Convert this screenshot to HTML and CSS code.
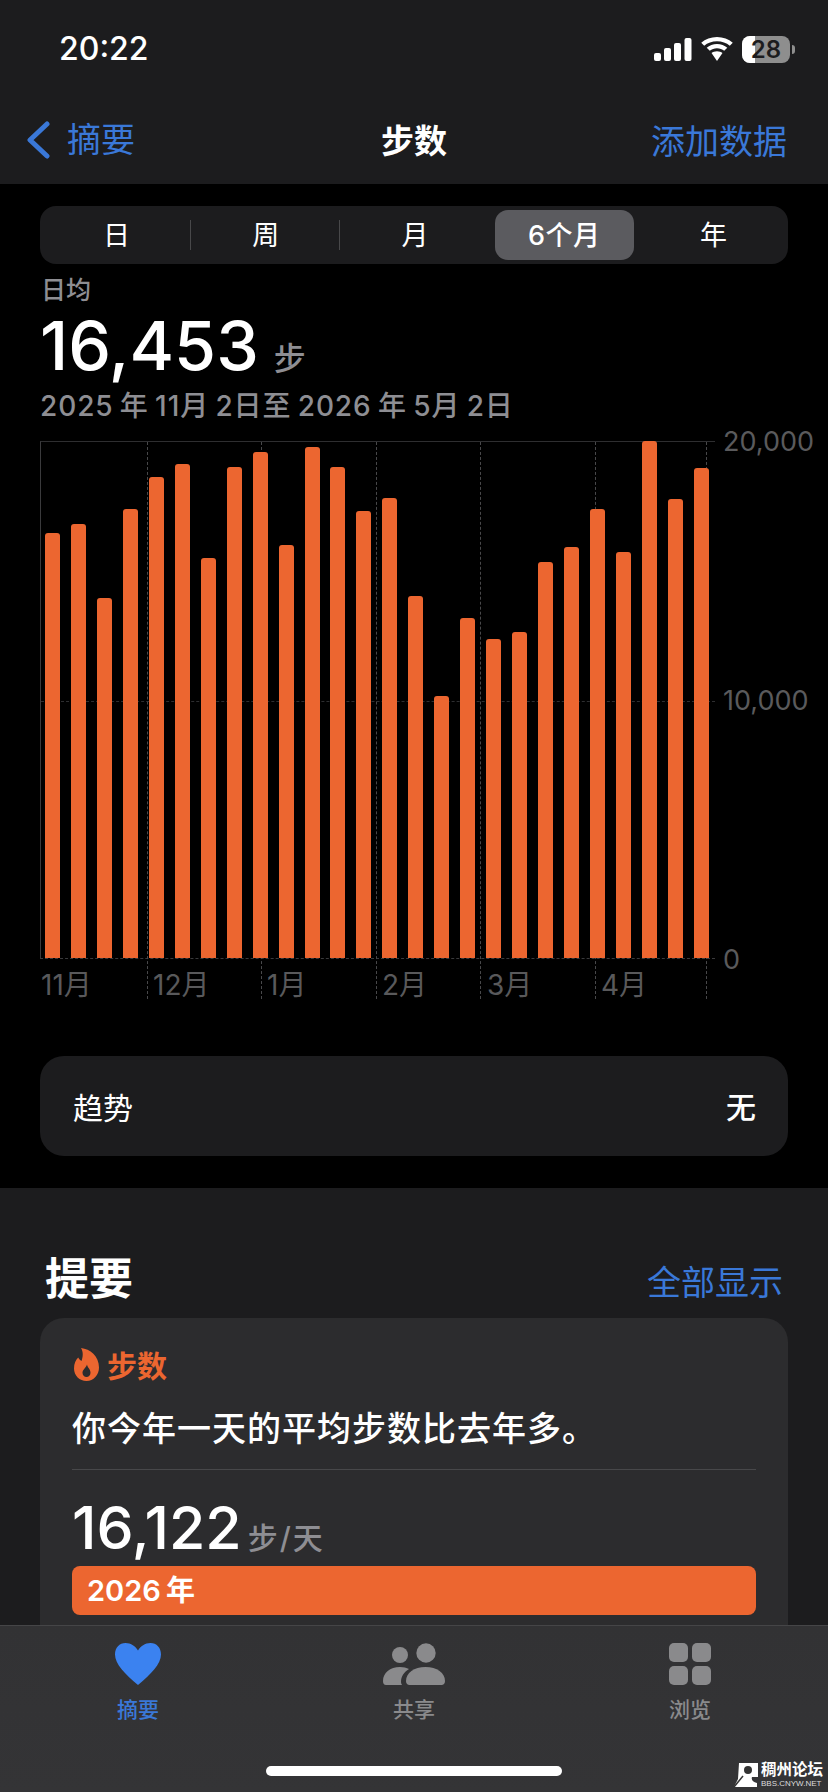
FILE: index.html
```html
<!DOCTYPE html>
<html lang="zh">
<head>
<meta charset="utf-8">
<title>步数</title>
<link rel="stylesheet" href="styles.css">
</head>
<body>
<div class="phone">
  <header class="top">
    <div class="status">
      <span class="time">20:22</span>
      <div class="status-icons">
        <svg class="signal" width="38" height="23" viewBox="0 0 38 23"><rect x="0" y="15" width="7" height="8" rx="2"/><rect x="10" y="10" width="7" height="13" rx="2"/><rect x="20" y="5" width="7" height="18" rx="2"/><rect x="30.500" y="0" width="7" height="23" rx="2"/></svg>
        <svg class="wifi" width="32" height="24" viewBox="2 0 28 24" preserveAspectRatio="none"><path d="M16 4.200c4.300 0 8.300 1.700 11.200 4.500l2.600-2.900C26.200 2.200 21.300 0 16 0S5.800 2.200 2.200 5.800l2.600 2.900C7.700 5.900 11.700 4.200 16 4.200z"/><path d="M16 11.200c2.400 0 4.600 .9 6.300 2.500l2.700-2.900C22.600 8.500 19.500 7.100 16 7.100s-6.600 1.400-9 3.700l2.700 2.900c1.700-1.600 3.900-2.500 6.300-2.500z"/><path d="M16 14.200c-1.900 0-3.600 .7-4.800 1.900L16 24l4.800-7.900c-1.200-1.200-2.900-1.900-4.800-1.900z"/></svg>
        <div class="battery"><div class="battery-body"><span class="battery-fill"></span><span class="battery-num">28</span></div><span class="battery-nub"></span></div>
      </div>
    </div>
    <nav class="nav">
      <div class="nav-back">
        <svg class="chev" width="26" height="38" viewBox="0 0 26 38"><path d="M22 3 5 19l17 16" fill="none" stroke="#3a78d8" stroke-width="5" stroke-linecap="round" stroke-linejoin="round"/></svg>
        <span>摘要</span>
      </div>
      <div class="nav-title">步数</div>
      <div class="nav-add">添加数据</div>
    </nav>
  </header>

  <main class="scroll">
    <section class="dark">
      <div class="segments">
        <span class="seg">日</span>
        <span class="seg seg-line">周</span>
        <span class="seg seg-line">月</span>
        <span class="seg seg-on">6个月</span>
        <span class="seg">年</span>
      </div>
      <div class="stat-label">日均</div>
      <div class="stat-row"><span class="stat-num">16,453</span><span class="stat-unit">步</span></div>
      <div class="stat-date">2025 年 11月 2日至 2026 年 5月 2日</div>

      <div class="chart">
        <div class="plot">
          <i class="gline gline-mid"></i>
          <i class="vline" style="left:106px"></i>
          <i class="vline" style="left:220px"></i>
          <i class="vline" style="left:335px"></i>
          <i class="vline" style="left:439px"></i>
          <i class="vline" style="left:554px"></i>
          <i class="vline" style="left:665px"></i>
          <div class="bars">
            <b style="height:425px"></b><b style="height:434px"></b><b style="height:360px"></b><b style="height:449px"></b><b style="height:481px"></b><b style="height:494px"></b><b style="height:400px"></b><b style="height:491px"></b><b style="height:506px"></b><b style="height:413px"></b><b style="height:511px"></b><b style="height:491px"></b><b style="height:447px"></b><b style="height:460px"></b><b style="height:362px"></b><b style="height:262px"></b><b style="height:340px"></b><b style="height:319px"></b><b style="height:326px"></b><b style="height:396px"></b><b style="height:411px"></b><b style="height:449px"></b><b style="height:406px"></b><b style="height:517px"></b><b style="height:459px"></b><b style="height:490px"></b>
          </div>
          <span class="ylab ylab-top">20,000</span>
          <span class="ylab ylab-mid">10,000</span>
          <span class="ylab ylab-zero">0</span>
        </div>
        <div class="months">
          <span class="m m1">11月</span><span class="m m2">12月</span><span class="m m3">1月</span><span class="m m4">2月</span><span class="m m5">3月</span><span class="m m6">4月</span>
        </div>
      </div>

      <div class="trend"><span class="trend-name">趋势</span><span class="trend-val">无</span></div>
    </section>

    <section class="summary">
      <div class="summary-head"><h2>提要</h2><span class="show-all">全部显示</span></div>
      <article class="card">
        <div class="card-tag">
          <svg class="flame" width="25" height="33" viewBox="0 0 25 33"><path fill-rule="evenodd" d="M7 0C16 1 25 8 25 19.500 25 27 19.500 33 12.500 33 5.500 33 0 27.500 0 20.500 0 15.500 1.800 12 4.200 9.500 5 11 6 12.200 7.500 13 9 9 9.500 4 7 0zM13 16.500C13.300 19.500 16.500 21 16.500 24.800 16.500 27.200 14.800 29 12.500 29 10.200 29 8.500 27.200 8.500 24.800 8.500 21.500 12 20 13 16.500z"/></svg>
          <span>步数</span>
        </div>
        <p class="card-text">你今年一天的平均步数比去年多。</p>
        <div class="card-rule"></div>
        <div class="card-stat"><span class="card-num">16,122</span><span class="card-unit">步/天</span></div>
        <div class="year-bar">2026 年</div>
      </article>
    </section>
  </main>

  <footer class="tabbar">
    <div class="tabs">
      <div class="tab tab-on">
        <svg width="46" height="42" viewBox="0 0 46 42"><path d="M23 42C10 31 0 21 0 11.500 0 4.700 4.500 0 10.500 0 16 0 20.500 3.200 23 7.500 25.500 3.200 30 0 35.500 0 41.500 0 46 4.700 46 11.500 46 21 36 31 23 42z" fill="#3b82f0"/></svg>
        <span>摘要</span>
      </div>
      <div class="tab">
        <svg width="62" height="42" viewBox="0 0 62 42"><circle cx="17" cy="12" r="8" fill="#8a8a8c"/><circle cx="43" cy="10" r="9.700" fill="#8a8a8c"/><path d="M0 38C0 30 7 24 17 24 20.500 24 23.500 24.800 26 26 21 29 18 33.500 18 39 18 40 18.300 41 19 42H3C1 42 0 40.500 0 38z" fill="#8a8a8c"/><path d="M23 38C23 30 31 24 42.500 24 54 24 62 30 62 38 62 40.500 60.500 42 58.500 42H26.500C24.500 42 23 40.500 23 38z" fill="#8a8a8c"/></svg>
        <span>共享</span>
      </div>
      <div class="tab">
        <div class="grid-icon"><i></i><i></i><i></i><i></i></div>
        <span>浏览</span>
      </div>
    </div>
    <div class="home-wrap">
      <div class="home"></div>
      <div class="mark">
        <svg width="24" height="25" viewBox="0 0 24 25"><path d="M5 1h19v14h-6c-1 3 1 5 5 6v4H0l4-8z" fill="#fff"/><circle cx="14" cy="8" r="4" fill="#333"/><path d="M0 25 9 14" stroke="#333" stroke-width="1.500"/></svg>
        <div class="mark-text"><span class="mark-cn">稠州论坛</span><span class="mark-en">BBS.CNYW.NET</span></div>
      </div>
    </div>
  </footer>
</div>
</body>
</html>
```
FILE: styles.css
```css
* { box-sizing: border-box; }
html, body { margin: 0; padding: 0; background: #000; }
body {
  font-family: Inter, "Noto Sans CJK SC", "Noto Sans", sans-serif;
  color: #fff;
}
.phone { width: 828px; height: 1792px; display: flex; flex-direction: column; overflow: hidden; }

/* top bars */
.top { height: 184px; flex: none; background: #1c1c1e; }
.status { height: 96px; padding: 30px 33px 0 59px; display: flex; justify-content: space-between; align-items: flex-start; }
.time { font-size: 32px; line-height: 38px; font-weight: 500; }
.status-icons { display: flex; align-items: flex-start; padding-top: 6px; margin-left: auto; }
.signal { fill: #fff; margin-top: 2px; }
.wifi { fill: #fff; margin: 1px 9px 0; }
.battery { display: flex; align-items: center; height: 27px; }
.battery-body { position: relative; width: 48px; height: 27px; border-radius: 8px; background: #8e8e8e; overflow: hidden; text-align: center; }
.battery-fill { position: absolute; left: 0; top: 0; bottom: 0; width: 13px; background: #fff; }
.battery-num { position: relative; font-size: 24px; line-height: 27px; font-weight: 600; color: #1c1c1e; display: block; }
.battery-nub { width: 3px; height: 9px; margin-left: 2px; border-radius: 0 3px 3px 0; background: #8e8e8e; }

.nav { height: 88px; padding: 0 26px; display: grid; grid-template-columns: 1fr auto 1fr; align-items: center; font-size: 34px; }
.nav-back { display: flex; align-items: center; gap: 16px; color: #3a78d8; line-height: 40px; margin-top: -1px; }
.nav-back .chev { margin-left: -1px; }
.nav-title { font-weight: 600; font-size: 33px; margin-top: -2px; }
.nav-add { color: #3a78d8; text-align: right; margin-top: -2px; padding-right: 15px; }

/* scrolling area */
.scroll { flex: 1; min-height: 0; overflow: hidden; }
.dark { height: 1004px; background: #000; padding: 22px 40px 0; }

.segments { height: 58px; padding: 4px 0 4px 2px; border-radius: 16px; background: #1c1c1e; display: grid; grid-template-columns: repeat(5, 1fr); font-size: 27px; }
.seg { display: flex; align-items: center; justify-content: center; position: relative; padding-bottom: 4px; }
.seg-line::before { content: ""; position: absolute; left: -1px; top: 10px; bottom: 10px; width: 1px; background: #48484a; }
.seg-on { background: #5b5b5f; border-radius: 13px; font-weight: 500; margin: 0 5px; letter-spacing: .5px; }

.stat-label { margin-top: 11px; font-size: 25px; line-height: 30px; color: #8e8e93; padding-left: 1px; font-weight: 500; }
.stat-row { display: flex; align-items: baseline; gap: 15px; margin-top: 2px; height: 76px; }
.stat-num { font-size: 68px; line-height: 76px; font-weight: 500; }
.stat-unit { font-size: 32px; color: #8e8e93; font-weight: 500; }
.stat-date { font-size: 28px; line-height: 36px; font-weight: 500; color: #8e8e93; margin-top: 5px; white-space: nowrap; letter-spacing: .9px; word-spacing: -2px; }

.chart { margin-top: 17px; }
.plot { position: relative; height: 518px; width: 675px; border-top: 1px solid #2e2e30; border-left: 1px solid #3a3a3c; border-bottom: 1px dashed #3a3a3c; }
.gline-mid { position: absolute; left: 0; right: 0; top: 259px; border-top: 1px dashed #2e2e30; }
.vline { position: absolute; top: 0; bottom: -41px; border-left: 1px dashed #48484a; }
.bars { position: absolute; left: 4px; right: 6px; bottom: 0; height: 518px; display: flex; align-items: flex-end; justify-content: space-between; }
.bars b { width: 15px; background: #ec6630; border-radius: 3px 3px 0 0; display: block; }
.ylab { position: absolute; left: 682px; font-size: 27px; line-height: 30px; color: #5a5a5c; }
.ylab-top { top: -15px; }
.ylab-mid { top: 244px; }
.ylab-zero { top: 503px; }

.months { position: relative; height: 40px; font-size: 28px; color: #59595b; }
.m { position: absolute; top: 11px; line-height: 30px; white-space: nowrap; }
.m1 { left: 1px; }
.m2 { left: 113px; }
.m3 { left: 227px; }
.m4 { left: 342px; }
.m5 { left: 447px; }
.m6 { left: 561px; }

.trend { margin-top: 57px; height: 100px; border-radius: 24px; background: #1c1c1e; padding: 0 32px 0 33px; display: flex; align-items: center; justify-content: space-between; font-size: 30px; }
.trend-val { font-weight: 500; font-size: 30px; margin-top: -3px; }

/* summary */
.summary { background: #1c1c1e; padding: 0 40px; height: 520px; }
.summary-head { height: 130px; padding: 60px 5px 0 5px; display: flex; justify-content: space-between; align-items: center; }
.summary-head h2 { margin: 0 0 9px; font-size: 44px; font-weight: 700; line-height: 50px; }
.show-all { font-size: 34px; color: #3a78d8; line-height: 40px; }
.card { background: #2c2c2e; border-radius: 24px; padding: 28px 32px 0; height: 340px; }
.card-tag { display: flex; align-items: center; gap: 8px; color: #ec6630; font-size: 30px; font-weight: 700; height: 36px; padding-left: 2px; }
.flame { fill: #ec6630; }
.card-text { margin: 25px 0 0; font-size: 34px; line-height: 44px; font-weight: 500; white-space: nowrap; letter-spacing: 1px; }
.card-rule { height: 1px; background: #48484a; margin-top: 18px; }
.card-stat { display: flex; align-items: baseline; gap: 6px; margin-top: 23px; height: 70px; }
.card-num { font-size: 59px; line-height: 70px; font-weight: 500; }
.card-unit { font-size: 30px; color: #8e8e93; font-weight: 500; letter-spacing: 2px; }
.year-bar { height: 49px; margin-top: 3px; border-radius: 8px; background: #ec6630; padding-left: 15px; font-size: 29px; font-weight: 600; line-height: 49px; word-spacing: -2px; }

/* tab bar */
.tabbar { height: 167px; flex: none; background: linear-gradient(180deg, #323234, #343436); border-top: 1px solid #454547; }
.tabs { display: grid; grid-template-columns: repeat(3, 1fr); height: 97px; padding-top: 17px; }
.tab { display: flex; flex-direction: column; align-items: center; gap: 13px; font-size: 21px; line-height: 24px; color: #8a8a8c; font-weight: 500; }
.tab svg { display: block; }
.tab-on { color: #3a78d8; }
.grid-icon { width: 42px; height: 42px; display: grid; grid-template-columns: 1fr 1fr; gap: 4px; }
.grid-icon i { background: #8a8a8c; border-radius: 5px; }
.home-wrap { display: grid; grid-template-columns: 1fr 296px 1fr; padding-top: 43px; }
.home { grid-column: 2; height: 10px; border-radius: 5px; background: #fff; }
.mark { grid-column: 3; justify-self: end; display: flex; gap: 3px; margin: -4px 5px 0 0; color: #fff; }
.mark-text { display: flex; flex-direction: column; }
.mark-cn { font-size: 15.500px; line-height: 16px; font-weight: 700; white-space: nowrap; }
.mark-en { font-family: "Liberation Sans", sans-serif; font-size: 8px; line-height: 11px; color: #ddd; white-space: nowrap; }
```
